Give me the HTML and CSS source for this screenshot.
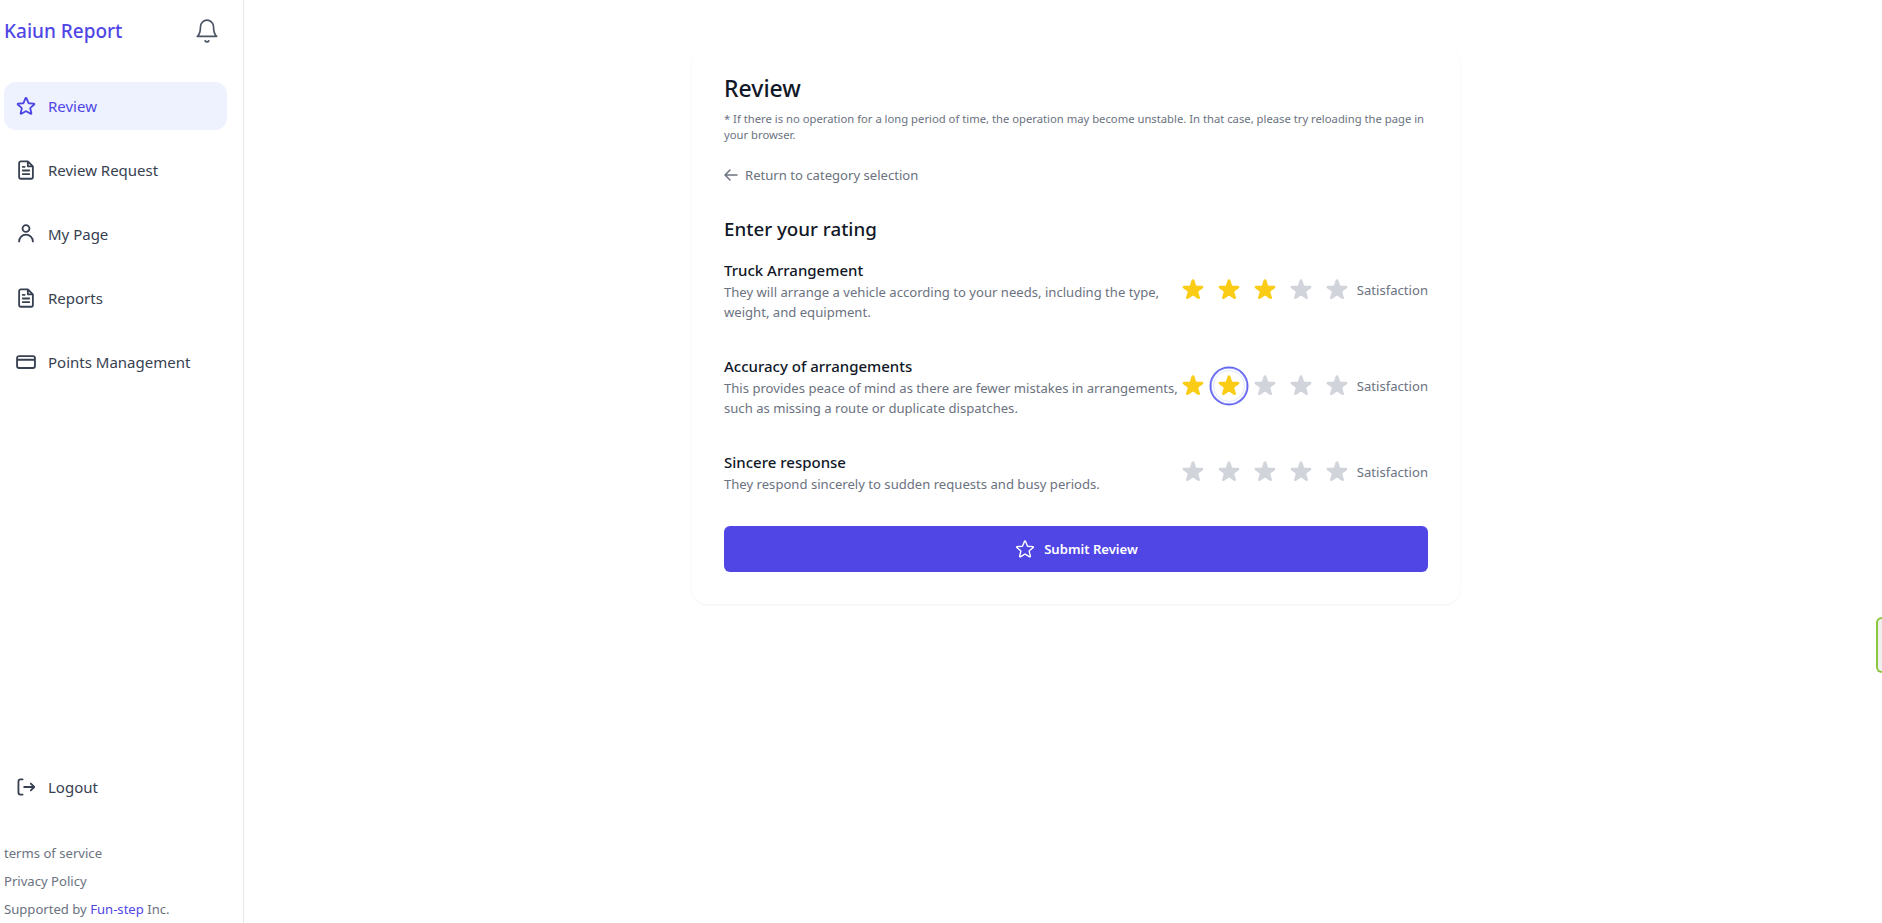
FILE: index.html
```html
<!DOCTYPE html>
<html lang="en">
<head>
  <meta charset="UTF-8">
  <meta name="viewport" content="width=device-width, initial-scale=1.0">
  <title>Kaiun Report</title>
  <link rel="stylesheet" href="styles.css">
</head>
<body>
  <svg class="defs" aria-hidden="true">
    <defs>
      <path id="star-line" d="M11.48 3.5a.56.56 0 0 1 1.04 0l2.13 5.11a.56.56 0 0 0 .47.35l5.52.44c.5.04.7.66.32.99l-4.2 3.6a.56.56 0 0 0-.18.56l1.28 5.38a.56.56 0 0 1-.84.61l-4.72-2.88a.56.56 0 0 0-.59 0l-4.72 2.88a.56.56 0 0 1-.84-.61l1.28-5.38a.56.56 0 0 0-.18-.56l-4.2-3.6a.56.56 0 0 1 .32-.99l5.52-.44a.56.56 0 0 0 .47-.35z"/>
      <path id="star-solid" d="M9.05 2.93c.3-.92 1.6-.92 1.9 0l1.07 3.29a1 1 0 0 0 .95.69h3.46c.97 0 1.37 1.24.59 1.81l-2.8 2.03a1 1 0 0 0-.36 1.12l1.07 3.29c.3.92-.76 1.69-1.54 1.12l-2.8-2.03a1 1 0 0 0-1.18 0l-2.8 2.03c-.78.57-1.84-.2-1.54-1.12l1.07-3.29a1 1 0 0 0-.36-1.12l-2.8-2.03c-.78-.57-.38-1.81.59-1.81h3.46a1 1 0 0 0 .95-.69z"/>
      <path id="doc" d="M14 2.5H6.5a2 2 0 0 0-2 2v15a2 2 0 0 0 2 2h11a2 2 0 0 0 2-2V8zM14 2.5V8h5.5M15.5 12.5h-7M15.5 16.5h-7M10.5 8.5h-2"/>
    </defs>
  </svg>

  <div class="layout">
    <aside class="sidebar">
      <div class="brand_row">
        <span class="brand">Kaiun Report</span>
        <svg class="bell" viewBox="0 0 24 24"><path d="M6 8a6 6 0 0 1 12 0c0 7 3 9 3 9H3s3-2 3-9M10.3 21a1.94 1.94 0 0 0 3.4 0"/></svg>
      </div>

      <nav class="nav">
        <a class="nav_item active"><svg class="icon" viewBox="0 0 24 24"><use href="#star-line"/></svg>Review</a>
        <a class="nav_item"><svg class="icon" viewBox="0 0 24 24"><use href="#doc"/></svg>Review Request</a>
        <a class="nav_item"><svg class="icon" viewBox="0 0 24 24"><path d="M15.75 6a3.75 3.75 0 1 1-7.5 0 3.75 3.75 0 0 1 7.5 0zM4.5 20.12a7.5 7.5 0 0 1 15 0"/></svg>My Page</a>
        <a class="nav_item"><svg class="icon" viewBox="0 0 24 24"><use href="#doc"/></svg>Reports</a>
        <a class="nav_item"><svg class="icon" viewBox="0 0 24 24"><path d="M2.25 9.5h19.5M4.5 18.5h15a2.25 2.25 0 0 0 2.25-2.25v-8.5A2.25 2.25 0 0 0 19.5 5.5h-15a2.25 2.25 0 0 0-2.25 2.25v8.5A2.25 2.25 0 0 0 4.5 18.5z"/></svg>Points Management</a>
      </nav>

      <div class="sidebar_bottom">
        <a class="nav_item"><svg class="icon" viewBox="0 0 24 24"><path d="M8.25 3.75H6A2.25 2.25 0 0 0 3.75 6v12A2.25 2.25 0 0 0 6 20.25h2.25M10 12h11m0 0-3.75-3.75M21 12l-3.75 3.75"/></svg>Logout</a>
        <ul class="links">
          <li>terms of service</li>
          <li>Privacy Policy</li>
          <li>Supported by <span class="link_accent">Fun-step</span> Inc.</li>
        </ul>
      </div>
    </aside>

    <main class="main">
      <section class="card">
        <h1 class="title">Review</h1>
        <p class="note">* If there is no operation for a long period of time, the operation may become unstable. In that case, please try reloading the page in your browser.</p>
        <a class="back">
          <svg viewBox="0 0 24 24"><path d="M10.5 19.5 3 12m0 0 7.5-7.5M3 12h18"/></svg>
          Return to category selection
        </a>
        <h2 class="subtitle">Enter your rating</h2>

        <div class="rating">
          <div class="rating_text">
            <h3>Truck Arrangement</h3>
            <p>They will arrange a vehicle according to your needs, including the type, weight, and equipment.</p>
          </div>
          <div class="stars">
            <span class="star on"><svg viewBox="0 0 20 20"><use href="#star-solid"/></svg></span>
            <span class="star on"><svg viewBox="0 0 20 20"><use href="#star-solid"/></svg></span>
            <span class="star on"><svg viewBox="0 0 20 20"><use href="#star-solid"/></svg></span>
            <span class="star"><svg viewBox="0 0 20 20"><use href="#star-solid"/></svg></span>
            <span class="star"><svg viewBox="0 0 20 20"><use href="#star-solid"/></svg></span>
            <span class="label">Satisfaction</span>
          </div>
        </div>

        <div class="rating">
          <div class="rating_text">
            <h3>Accuracy of arrangements</h3>
            <p>This provides peace of mind as there are fewer mistakes in arrangements, such as missing a route or duplicate dispatches.</p>
          </div>
          <div class="stars">
            <span class="star on"><svg viewBox="0 0 20 20"><use href="#star-solid"/></svg></span>
            <span class="star on focus"><svg viewBox="0 0 20 20"><use href="#star-solid"/></svg></span>
            <span class="star"><svg viewBox="0 0 20 20"><use href="#star-solid"/></svg></span>
            <span class="star"><svg viewBox="0 0 20 20"><use href="#star-solid"/></svg></span>
            <span class="star"><svg viewBox="0 0 20 20"><use href="#star-solid"/></svg></span>
            <span class="label">Satisfaction</span>
          </div>
        </div>

        <div class="rating">
          <div class="rating_text">
            <h3>Sincere response</h3>
            <p>They respond sincerely to sudden requests and busy periods.</p>
          </div>
          <div class="stars">
            <span class="star"><svg viewBox="0 0 20 20"><use href="#star-solid"/></svg></span>
            <span class="star"><svg viewBox="0 0 20 20"><use href="#star-solid"/></svg></span>
            <span class="star"><svg viewBox="0 0 20 20"><use href="#star-solid"/></svg></span>
            <span class="star"><svg viewBox="0 0 20 20"><use href="#star-solid"/></svg></span>
            <span class="star"><svg viewBox="0 0 20 20"><use href="#star-solid"/></svg></span>
            <span class="label">Satisfaction</span>
          </div>
        </div>

        <button class="submit">
          <svg viewBox="0 0 24 24"><use href="#star-line"/></svg>
          Submit Review
        </button>
      </section>
    </main>
  </div>

  <div class="side_tab"></div>
</body>
</html>
```

FILE: styles.css
```css
* {
  box-sizing: border-box;
}

body {
  margin: 0;
  height: 923px;
  overflow: hidden;
  background: #fff;
  color: #374151;
  font-family: "Noto Sans", sans-serif;
  font-size: 15px;
}

.defs {
  display: none;
}

.layout {
  display: flex;
  height: 923px;
}

/* sidebar */
.sidebar {
  display: flex;
  flex-direction: column;
  width: 244px;
  padding: 0 16px 0 4px;
  border-right: 1px solid #e5e7eb;
}

.brand_row {
  display: flex;
  align-items: center;
  justify-content: space-between;
  height: 62px;
  padding-right: 7px;
}

.brand {
  color: #4f46e5;
  font-size: 19px;
  font-weight: 500;
}

.bell {
  width: 26px;
  height: 26px;
  fill: none;
  stroke: #4b5563;
  stroke-width: 1.5;
  stroke-linecap: round;
  stroke-linejoin: round;
}

.nav {
  display: flex;
  flex-direction: column;
  gap: 16px;
  margin-top: 20px;
}

.nav_item {
  display: flex;
  align-items: center;
  gap: 11px;
  height: 48px;
  padding: 0 11px;
  border-radius: 12px;
  color: #374151;
}

.nav_item.active {
  background: #eef2ff;
  color: #4f46e5;
}

.icon {
  flex: none;
  width: 22px;
  height: 22px;
  fill: none;
  stroke: currentColor;
  stroke-width: 2;
  stroke-linecap: round;
  stroke-linejoin: round;
}

.sidebar_bottom {
  margin-top: auto;
}

.links {
  margin: 28px 0 0;
  padding: 0;
  list-style: none;
  color: #6b7280;
  font-size: 13.1px;
}

.links li {
  height: 28px;
  line-height: 28px;
}

.link_accent {
  color: #4f46e5;
}

/* main */
.main {
  flex: 1;
  display: flex;
  justify-content: center;
  align-items: flex-start;
  padding: 44px 0 0 26px;
}

.card {
  width: 768px;
  padding: 26px 32px 32px;
  border-radius: 16px;
  background: #fff;
  box-shadow: 0 1px 3px rgba(0, 0, 0, 0.05);
}

.title {
  margin: 0;
  color: #111827;
  font-size: 23px;
  font-weight: 500;
  line-height: 36px;
}

.note {
  margin: 5px 0 0;
  color: #6b7280;
  font-size: 11.25px;
  line-height: 16px;
}

.back {
  display: flex;
  align-items: center;
  gap: 6px;
  margin-top: 22px;
  margin-left: -1px;
  color: #6b7280;
  font-size: 13.1px;
  line-height: 20px;
}

.back svg {
  width: 16px;
  height: 16px;
  fill: none;
  stroke: currentColor;
  stroke-width: 2.2;
  stroke-linecap: round;
  stroke-linejoin: round;
}

.subtitle {
  margin: 30px 0 0;
  color: #111827;
  font-size: 18.75px;
  font-weight: 500;
  line-height: 28px;
}

.rating {
  display: flex;
  align-items: center;
  justify-content: space-between;
  margin-top: 15px;
  margin-bottom: 32px;
}

.rating + .rating {
  margin-top: 0;
}

.rating:last-of-type {
  margin-bottom: 0;
}

.rating_text {
  flex: 1;
  min-width: 0;
  margin-right: -4px;
}

.rating_text h3 {
  margin: 0;
  color: #111827;
  font-size: 15px;
  font-weight: 500;
  line-height: 24px;
}

.rating_text p {
  margin: 0;
  color: #6b7280;
  font-size: 13.1px;
  line-height: 20px;
}

.stars {
  flex: none;
  display: flex;
  align-items: center;
  width: 253px;
}

.star {
  flex: none;
  display: flex;
  align-items: center;
  justify-content: center;
  width: 36px;
  height: 36px;
  color: #d1d5db;
}

.star.on {
  color: #facc15;
}

.star.focus {
  border-radius: 50%;
  box-shadow: 0 0 0 1.5px #6366f1, inset 0 0 0 0.5px #6366f1;
  outline: 1px solid #e0e7ff;
  outline-offset: -3px;
}

.star svg {
  width: 28px;
  height: 28px;
  fill: currentColor;
}

.label {
  margin-left: auto;
  color: #6b7280;
  font-size: 13.1px;
}

.submit {
  display: flex;
  align-items: center;
  justify-content: center;
  gap: 8px;
  width: 100%;
  height: 46px;
  margin-top: 32px;
  border: 0;
  border-radius: 6px;
  background: #4f46e5;
  color: #fff;
  font-family: inherit;
  font-size: 13.1px;
  font-weight: 600;
}

.submit svg {
  width: 22px;
  height: 22px;
  fill: none;
  stroke: currentColor;
  stroke-width: 1.5;
  stroke-linejoin: round;
}

/* floating tab on the right edge */
.side_tab {
  position: fixed;
  top: 617px;
  right: 0;
  width: 6px;
  height: 56px;
  border: 2px solid #8cc63f;
  border-right: 0;
  border-radius: 8px 0 0 8px;
  background: #f0f0f0;
}
```
